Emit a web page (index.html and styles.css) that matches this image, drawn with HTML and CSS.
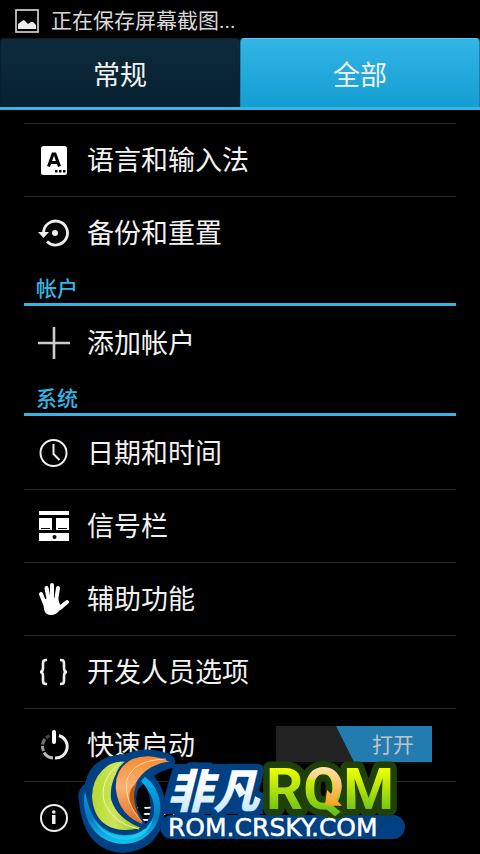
FILE: index.html
```html
<!DOCTYPE html>
<html lang="zh-CN">
<head>
<meta charset="utf-8">
<meta name="viewport" content="width=device-width, initial-scale=1">
<title>设置</title>
<link rel="stylesheet" href="styles.css">
</head>
<body>
<header class="status">
  <svg class="status-icon" viewBox="0 0 24 24" aria-hidden="true"><rect x="1" y="1" width="22" height="22" fill="#000" stroke="#ddd" stroke-width="1.6"/><path d="M3 20v-5l4-3 2-1 4 4 3-2 2 0 3 3v4z" fill="#eee"/></svg>
  <span>正在保存屏幕截图...</span>
</header>
<nav class="tabs">
  <button class="tab" type="button">常规</button>
  <button class="tab tab-active" type="button">全部</button>
</nav>
<main class="settings">
  <ul class="group">
    <li class="row"><a class="link" href="#language">
      <svg class="icon" viewBox="0 0 32 32" aria-hidden="true"><rect x="3" y="2" width="26" height="29" rx="2.5" fill="#fff"/><path d="M10.500 22.500 15 10h2L21.500 22.500M12 18.500h8" fill="none" stroke="#000" stroke-width="3"/><path d="M17 26h2.500v2.500H17zM21 26h2.500v2.500H21zM25 26h2.500v2.500H25z"/></svg>
      <span>语言和输入法</span></a></li>
    <li class="row"><a class="link" href="#backup">
      <svg class="icon" viewBox="0 0 32 32" aria-hidden="true"><path d="M5.500 16A12 12 0 1 1 9 24.500" fill="none" stroke="#eee" stroke-width="2.800"/><path d="M0 15h11l-5.500 6z" fill="#eee"/><circle cx="17" cy="16" r="3" fill="#eee"/></svg>
      <span>备份和重置</span></a></li>
  </ul>
  <h2 class="heading">帐户</h2>
  <ul class="group">
    <li class="row"><a class="link" href="#add-account">
      <svg class="icon" viewBox="0 0 32 32" aria-hidden="true"><path d="M16 0v32M0 16h32" stroke="#ccc" stroke-width="2.600"/></svg>
      <span>添加帐户</span></a></li>
  </ul>
  <h2 class="heading">系统</h2>
  <ul class="group">
    <li class="row"><a class="link" href="#date">
      <svg class="icon" viewBox="0 0 32 32" aria-hidden="true"><circle cx="15.500" cy="16" r="13" fill="none" stroke="#eee" stroke-width="2"/><path d="M15.500 7v10l6 6" fill="none" stroke="#eee" stroke-width="2"/></svg>
      <span>日期和时间</span></a></li>
    <li class="row"><a class="link" href="#signal">
      <svg class="icon" viewBox="0 0 32 32" aria-hidden="true"><path d="M1 1h30v4H1zM1 8h13v12H1zM18 8h13v12H18zM1 23h30v8H1z" fill="#fff"/><path d="M3 18.500h9M20 18.500h9" stroke="#000"/><circle cx="16.500" cy="27" r="2"/></svg>
      <span>信号栏</span></a></li>
    <li class="row"><a class="link" href="#accessibility">
      <svg class="icon" viewBox="0 0 32 32" aria-hidden="true"><g fill="none" stroke="#fff" stroke-width="4" stroke-linecap="round"><path d="M3 11 7 21M8.500 5 11 18M14 2v16M20 5 18 18M29 19 22 25"/></g><path d="M5 18 9 15h11l2 7 6-4 1 1-8 9q-3 4-8 4-6 0-7-6z" fill="#fff"/></svg>
      <span>辅助功能</span></a></li>
    <li class="row"><a class="link" href="#developer">
      <svg class="icon" viewBox="0 0 32 32" aria-hidden="true"><path d="M9 4H8Q5 4 5 7v5q0 4-3 4 3 0 3 4v5q0 3 3 3h1M22 4h1q3 0 3 3v5q0 4 3 4-3 0-3 4v5q0 3-3 3h-1" fill="none" stroke="#eee" stroke-width="2.600"/></svg>
      <span>开发人员选项</span></a></li>
    <li class="row"><a class="link" href="#fast-boot">
      <svg class="icon" viewBox="0 0 32 32" aria-hidden="true"><g fill="none" stroke-width="3"><path d="M21 6.500A11.500 11.500 0 0 1 17 29" stroke="#eee"/><path d="M15 29A11.500 11.500 0 0 1 6 23.500" stroke="#bbb"/><path d="M5.500 22A11.500 11.500 0 0 1 4.500 17" stroke="#999"/><path d="M4.500 15.500A11.500 11.500 0 0 1 7 10" stroke="#777"/><path d="M8 9 11.500 6.500" stroke="#444"/></g><path d="M16 3v10" stroke="#fff" stroke-width="4" stroke-linecap="round"/></svg>
      <span>快速启动</span></a>
      <button class="switch" type="button" role="switch" aria-checked="true" aria-label="快速启动"><span class="thumb">打开</span></button></li>
    <li class="row"><a class="link" href="#about">
      <svg class="icon" viewBox="0 0 32 32" aria-hidden="true"><circle cx="16" cy="16" r="13" fill="none" stroke="#eee" stroke-width="2"/><path d="M14 13h3.500v9h-3.500z" fill="#eee"/><circle cx="15.800" cy="10" r="1.800" fill="#eee"/></svg>
      <span>关于手机</span></a></li>
  </ul>
</main>
<svg class="watermark" viewBox="0 0 330 112" role="img" aria-label="非凡ROM ROM.CRSKY.COM">
  <defs>
    <linearGradient id="green" x2="0" y2="1"><stop offset=".2" stop-color="#efff00"/><stop offset=".85" stop-color="#6abf18"/></linearGradient>
    <linearGradient id="leaf" x1="0" x2="1"><stop stop-color="#b4d92f"/><stop offset=".45" stop-color="#cfe45c"/><stop offset="1" stop-color="#8fbf10"/></linearGradient>
    <linearGradient id="orange" x2="0" y2="1"><stop stop-color="#f58a2e"/><stop offset=".45" stop-color="#fbb273"/><stop offset="1" stop-color="#e06a1c"/></linearGradient>
    <linearGradient id="sea" x2="0" y2="1"><stop stop-color="#00b4f2"/><stop offset=".6" stop-color="#0a78c0"/><stop offset="1" stop-color="#10c4ee"/></linearGradient>
    <linearGradient id="ice" x2="0" y2="1"><stop offset=".4" stop-color="#fff"/><stop offset="1" stop-color="#b5e0fa"/></linearGradient>
    <linearGradient id="gold" x2="0" y2="1"><stop stop-color="#ffe3ae"/><stop offset="1" stop-color="#f5a21c"/></linearGradient>
  </defs>
  <path d="M1 60Q-2 48 7 42 12 14 47 12 66 4 85 10 102 13 95 26 84 28 76 34 88 48 87 67 84 108 45 111 6 109 1 60zM61 46Q53 61 68 82 76 67 70 50 68 44 66 42z" fill="#004083" fill-rule="evenodd"/>
  <path d="M94 85h221" fill="none" stroke="#004083" stroke-width="24" stroke-linecap="round"/>
  <path d="M86 56 96 22h80l9 50H84z" fill="#004083"/>
  <path d="M7 49C2 76 17 101 45 102c24 0 40-20 37-42Q79 43 67 35l-4 4q17 19 12 36Q67 94 45 93 14 91 7 49z" fill="url(#sea)"/>
  <path d="M14 75Q27 96 50 94 66 92 75 77 70 96 49 98 26 98 14 75z" fill="#1acaf0"/>
  <path d="M50 19C30 15 13 33 13 55c2 28 22 40 53 31Q40 77 34 57 32 35 50 19z" fill="url(#leaf)" stroke="#004083" stroke-width="2"/>
  <path d="M43 20Q19 40 27 62q9 20 34 25" fill="none" stroke="#edf7b0"/>
  <path d="M94 20Q74 9 54 16 35 26 37 48q3 27 30 36-18-26-8-43Q69 23 94 20z" fill="url(#orange)" stroke="#004083" stroke-width="2"/>
  <path d="M88 17Q55 18 49 38q-4 20 15 42" fill="none" stroke="#ffd7a6"/>
  <path d="M59 41Q47 49 54 65l11 17Q51 58 59 41z" fill="#c2590f"/>
  <g stroke-linejoin="round" paint-order="stroke">
    <text class="mark-cn" x="89" y="66" fill="url(#ice)" stroke="#004083" stroke-width="13">非凡</text>
    <text class="mark-rom" x="188" y="67" fill="url(#green)" stroke="#1f400b" stroke-width="13">RQM</text>
    <path d="M94 86h221" fill="none" stroke="#004083" stroke-width="20" stroke-linecap="round"/>
    <text class="mark-url" x="90" y="94" fill="#fff" stroke="#fff" stroke-width=".5">ROM.CRSKY.COM</text>
  </g>
  <path d="M230 37q2-11 15-12 13 0 18 13 3 12-5 19l6 7-17-1 2-15 4 4q5-8 1-15-8-11-16-1z" fill="url(#gold)"/>
</svg>
</body>
</html>
```
FILE: styles.css
```css
* { box-sizing: border-box; }
html { background: #000; }
body {
  margin: 0;
  color: #f2f2f2;
  background: #000;
  font-family: Roboto, "Noto Sans CJK SC", sans-serif;
  position: relative;
  overflow-x: hidden;
}
button { border: 0; padding: 0; font: inherit; color: inherit; }
.status {
  display: flex;
  align-items: center;
  gap: 12px;
  height: 38px;
  padding: 4px 15px 0;
  font-size: 21px;
  line-height: 32px;
  color: #d8d8d8;
}
.status-icon { width: 24px; height: 24px; }
.tabs { display: flex; border-bottom: 3px solid #33b5e5; }
.tab {
  flex: 1;
  height: 69px;
  font-size: 27px;
  background: linear-gradient(#0d2a3a, #062232);
  border: 1px solid #0a1d28;
  border-bottom: 0;
  border-radius: 4px 4px 0 0;
}
.tab-active {
  background: linear-gradient(#33b5e5, #149dd2);
  border-color: #55c2ea #1583ae;
}
.settings { padding: 13px 24px 0; }
.group { list-style: none; margin: 0; padding: 0; }
.row {
  display: flex;
  align-items: center;
  height: 73px;
  border-top: 1px solid #262626;
}
.heading + .group .row:first-child { border-top-color: transparent; }
.link {
  display: flex;
  flex: 1;
  align-items: center;
  gap: 17px;
  padding-left: 14px;
  font-size: 27px;
  line-height: 40px;
  color: inherit;
  text-decoration: none;
}
.link span { padding-top: 2px; }
.icon { width: 32px; height: 32px; flex: none; }
.heading {
  margin: 0;
  height: 37px;
  padding: 4px 12px 0;
  border-bottom: 3px solid #33b5e5;
  color: #33b5e5;
  font-size: 21px;
  font-weight: 500;
  line-height: 32px;
}
.switch {
  display: flex;
  justify-content: flex-end;
  width: 156px;
  height: 38px;
  margin-right: 24px;
  background: #222;
  border-bottom: 2px solid #0c0c0c;
}
.thumb {
  width: 96px;
  height: 36px;
  padding-left: 18px;
  background: #237cb0;
  clip-path: polygon(0 0, 100% 0, 100% 100%, 18px 100%);
  color: #c2c2c2;
  font-size: 21px;
  line-height: 38px;
}
.watermark {
  position: absolute;
  left: 78px;
  bottom: 0;
  width: 330px;
  height: 112px;
  pointer-events: none;
  overflow: visible;
}
.mark-cn { font: italic 900 46px "Noto Sans CJK SC", sans-serif; }
.mark-rom { font: 700 58px Roboto, sans-serif; }
.mark-url { font: 400 25px "DejaVu Sans", sans-serif; }
```
